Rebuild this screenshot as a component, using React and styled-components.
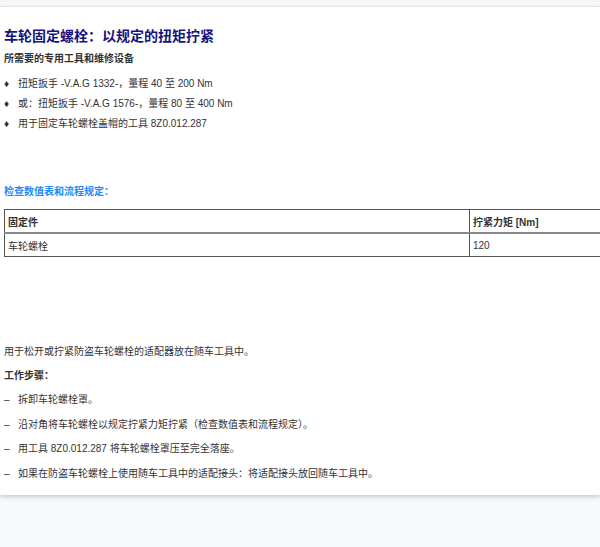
import React from 'react'
import styled, { createGlobalStyle } from 'styled-components'

const Global = createGlobalStyle`
  body {
    margin: 0;
    background: #f5f9fc;
    font-family: Arial, "Liberation Sans", "Noto Sans CJK SC", sans-serif;
    overflow: hidden;
  }
`

const Page = styled.div`
  width: 600px;
  height: 547px;
  overflow: hidden;
`

const Panel = styled.div`
  background: #fff;
  border-top: 1px solid #e6e6e6;
  margin-top: 6px;
  height: 489px;
  box-sizing: border-box;
  padding: 20px 0 0 4px;
  box-shadow: 0 2px 4px rgba(0, 0, 0, 0.18);
  color: #333;
  font-size: 10px;
`

const Title = styled.h1`
  margin: 0;
  font-size: 14px;
  font-weight: bold;
  color: #14147a;
  line-height: 18px;
`

const Sub = styled.div`
  margin-top: ${p => p.$mt}px;
  font-weight: bold;
  line-height: 14px;
  color: ${p => p.$blue ? '#1a8cff' : '#333'};
`

const List = styled.ul`
  list-style: none;
  margin: ${p => p.$mt}px 0 0;
  padding: 0;
`

const Item = styled.li`
  display: flex;
  line-height: 14px;
  margin-bottom: ${p => p.$gap}px;
  span:first-child {
    width: 14px;
    flex: none;
  }
`

const Table = styled.table`
  width: 620px;
  border-collapse: collapse;
  margin-top: 10px;
  td, th {
    border: 1px solid #555;
    text-align: left;
    padding: 0 3px;
    height: 22px;
    font-size: 10px;
  }
  th { font-weight: bold; border-bottom: 2px solid #888; }
  td:first-child, th:first-child { width: 458px; }
`

const Para = styled.p`
  margin: 0;
  line-height: 14px;
  margin-top: ${p => p.$mt}px;
  font-weight: ${p => p.$bold ? 'bold' : 'normal'};
`

const tools = [
  '扭矩扳手 -V.A.G 1332-，量程 40 至 200 Nm',
  '或：扭矩扳手 -V.A.G 1576-，量程 80 至 400 Nm',
  '用于固定车轮螺栓盖帽的工具 8Z0.012.287',
]

const steps = [
  '拆卸车轮螺栓罩。',
  '沿对角将车轮螺栓以规定拧紧力矩拧紧（检查数值表和流程规定）。',
  '用工具 8Z0.012.287 将车轮螺栓罩压至完全落座。',
  '如果在防盗车轮螺栓上使用随车工具中的适配接头：将适配接头放回随车工具中。',
]

export default function App() {
  return (
    <Page>
      <Global />
      <Panel>
        <Title>车轮固定螺栓：以规定的扭矩拧紧</Title>
        <Sub $mt={7}>所需要的专用工具和维修设备</Sub>
        <List $mt={11}>
          {tools.map(t => (
            <Item key={t} $gap={6}><span>♦</span><span>{t}</span></Item>
          ))}
        </List>
        <Sub $blue $mt={54}>检查数值表和流程规定：</Sub>
        <Table>
          <thead>
            <tr><th>固定件</th><th>拧紧力矩 [Nm]</th></tr>
          </thead>
          <tbody>
            <tr><td>车轮螺栓</td><td>120</td></tr>
          </tbody>
        </Table>
        <Para $mt={88}>用于松开或拧紧防盗车轮螺栓的适配器放在随车工具中。</Para>
        <Para $mt={10} $bold>工作步骤：</Para>
        <List $mt={10}>
          {steps.map(s => (
            <Item key={s} $gap={10.5}><span>–</span><span>{s}</span></Item>
          ))}
        </List>
      </Panel>
    </Page>
  )
}
